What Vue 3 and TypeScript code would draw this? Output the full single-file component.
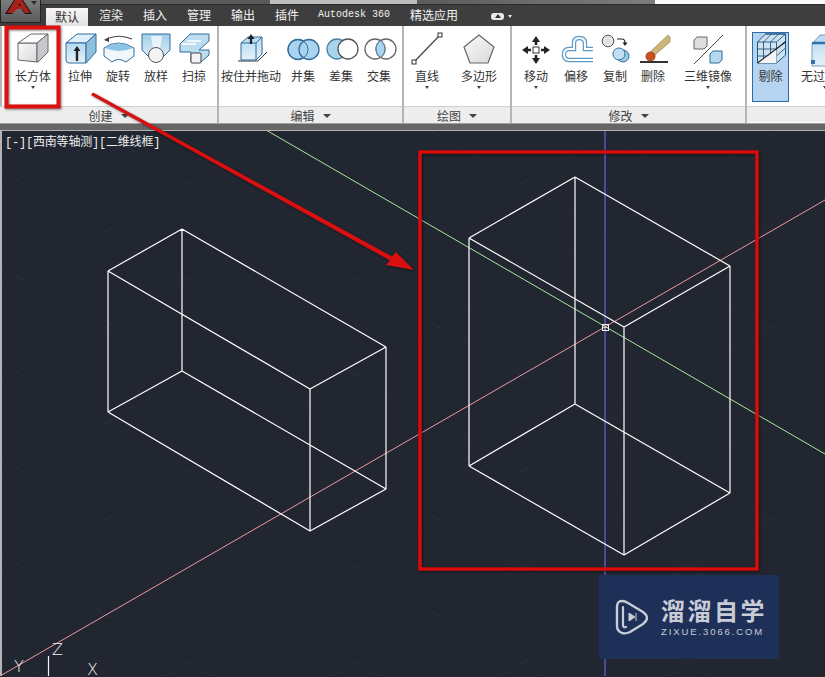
<script setup lang="ts">
interface Tool {
  label: string
  cx: number
  w: number
  ml?: number
  arrow?: boolean
  active?: boolean
  start?: boolean
  icon: string
}
interface Panel {
  width: number
  pad: number
  title: string
  tools: Tool[]
}

const BLUE = 'url(#gBlue)'
const GREY = 'url(#gGrey)'
const EDGE = '#2f6d9c'

const panels: Panel[] = [
  {
    width: 219, pad: 14, title: '创建',
    tools: [
      { label: '长方体', cx: 33, w: 38, arrow: true,
        icon: `<path d="M18 43 H37 V62 L18 60 Z" fill="url(#gGrey)" stroke="#666" stroke-linejoin="round"/><path d="M18 43 L31 34 H48 L37 43 Z" fill="#fcfcfc" stroke="#666" stroke-linejoin="round"/><path d="M37 43 L48 34 V52 L38 62 L37 62 Z" fill="#c6c8cb" stroke="#666" stroke-linejoin="round"/>` },
      { label: '拉伸', cx: 80, w: 38, ml: 9,
        icon: `<path d="M66 43 L77 34 H96 L86 43 Z" fill="#dff0fa" stroke="${EDGE}" stroke-linejoin="round"/><path d="M66 43 H86 V63 H69 Q66 63 66 60 Z" fill="${BLUE}" stroke="${EDGE}"/><path d="M86 43 L96 34 V52 L86 63 Z" fill="#8fc1df" stroke="${EDGE}" stroke-linejoin="round"/><path d="M77 61 V50" stroke="#222" stroke-width="2.4"/><path d="M73.5 51 L77 46 L80.5 51 Z" fill="#222"/>` },
      { label: '旋转', cx: 118, w: 38,
        icon: `<path d="M105 40 Q118 33 132 39" fill="none" stroke="#444" stroke-width="1.2"/><path d="M104 40 L109 37 V42 Z" fill="#444"/><path d="M104 48 Q118 38 134 48 V56 L126 62 Q118 57 112 62 L104 56 Z" fill="#f1f6f9" stroke="${EDGE}" stroke-linejoin="round"/><path d="M105 48 Q118 39 133 48 Q119 54 105 48 Z" fill="#8dc4e4"/>` },
      { label: '放样', cx: 156, w: 38,
        icon: `<path d="M142 34 H170 V50 L160 60 H152 L142 50 Z" fill="url(#gBlueV)" stroke="${EDGE}" stroke-linejoin="round"/><path d="M151 36 H162 L160 48 H153 Z" fill="#fff" opacity=".7"/><circle cx="156" cy="55" r="7.5" fill="#f4f4f4" stroke="#555"/>` },
      { label: '扫掠', cx: 194, w: 38,
        icon: `<path d="M180 44 L190 34 H209 V41 L199 50 H209 V55 L201 62 H191 V52 L180 52 Z" fill="#bcdcef" stroke="${EDGE}" stroke-linejoin="round"/><path d="M187 41 H201 M181 44 H196" stroke="#fff" stroke-width="1.4"/><rect x="191" y="53" width="10" height="10" rx="1" fill="#f3f3f3" stroke="#444"/>` },
    ],
  },
  {
    width: 185, pad: 1, title: '编辑',
    tools: [
      { label: '按住并拖动', cx: 251, w: 62,
        icon: `<path d="M238 61 H258 L267 52" fill="none" stroke="#333"/><path d="M241 43 L248 37 H262 V54 L256 60 H241 Z" fill="${BLUE}" stroke="${EDGE}" stroke-linejoin="round"/><path d="M241 43 H256 L262 37 M256 43 V60" fill="none" stroke="${EDGE}"/><path d="M251 44 V38" stroke="#222" stroke-width="2.2"/><path d="M247.5 39 L251 34 L254.5 39 Z" fill="#222"/>` },
      { label: '并集', cx: 303, w: 38, ml: 2,
        icon: `<circle cx="298" cy="49.5" r="10" fill="#a9d3ee" stroke="${EDGE}" stroke-width="1.3"/><circle cx="309" cy="49.5" r="10" fill="#a9d3ee" stroke="${EDGE}" stroke-width="1.3"/><circle cx="298" cy="49.5" r="10" fill="none" stroke="${EDGE}" stroke-width="1"/>` },
      { label: '差集', cx: 341, w: 38,
        icon: `<circle cx="337" cy="49" r="10" fill="#a9d3ee" stroke="#4f7f9f" stroke-width="1.3"/><circle cx="348" cy="49" r="10" fill="#fff" stroke="#555" stroke-width="1.3"/>` },
      { label: '交集', cx: 379, w: 38,
        icon: `<circle cx="375" cy="49" r="10" fill="#fff" stroke="#666" stroke-width="1.3"/><circle cx="386" cy="49" r="10" fill="none" stroke="#666" stroke-width="1.3"/><path d="M380.5 40.7 A10 10 0 0 1 380.5 57.3 A10 10 0 0 1 380.5 40.7 Z" fill="#a9d3ee" stroke="#4f7f9f"/>` },
    ],
  },
  {
    width: 108, pad: 0, title: '绘图',
    tools: [
      { label: '直线', cx: 427, w: 46, arrow: true,
        icon: `<path d="M414 62 L440 35" stroke="#444" stroke-width="1.2"/><rect x="412" y="60" width="4" height="4" fill="#fff" stroke="#333"/><rect x="438" y="33" width="4" height="4" fill="#fff" stroke="#333"/>` },
      { label: '多边形', cx: 479, w: 58, arrow: true,
        icon: `<path d="M479 35 L494 47 L488 63 H470 L464 47 Z" fill="${GREY}" stroke="#666" stroke-width="1.2" stroke-linejoin="round"/>` },
    ],
  },
  {
    width: 235, pad: 0, title: '修改',
    tools: [
      { label: '移动', cx: 536, w: 48, arrow: true,
        icon: `<rect x="533" y="47" width="6" height="6" fill="#fff" stroke="#333"/><path d="M536 36 L540 42 H537.3 V45 H534.7 V42 H532 Z M536 64 L540 58 H537.3 V55 H534.7 V58 H532 Z M522 50 L528 46 V48.7 H531 V51.3 H528 V54 Z M550 50 L544 46 V48.7 H541 V51.3 H544 V54 Z" fill="#222"/>` },
      { label: '偏移', cx: 576, w: 32,
        icon: `<path d="M593 49 H585 V43 Q585 38 579 38 Q574 38 574 43 V49 H569 Q564 49 564 54.5 Q564 60 569 60 H593" fill="none" stroke="#5d9cc7" stroke-width="4.4"/><path d="M593 49 H585 V43 Q585 38 579 38 Q574 38 574 43 V49 H569 Q564 49 564 54.5 Q564 60 569 60 H593" fill="none" stroke="#fff" stroke-width="2"/>` },
      { label: '复制', cx: 615, w: 46,
        icon: `<circle cx="608" cy="41" r="5.8" fill="#e5e5e5" stroke="#555"/><path d="M617 39 H622 Q625 39 625 43" fill="none" stroke="#222" stroke-width="1.2"/><path d="M622.5 42.5 H627.5 L625 46 Z" fill="#222"/><circle cx="623" cy="56" r="6" fill="#9ccbe8" stroke="${EDGE}"/><circle cx="619" cy="54" r="6" fill="#c3e0f2" stroke="${EDGE}"/>` },
      { label: '删除', cx: 653, w: 30,
        icon: `<path d="M640 62 H668" stroke="#333" stroke-width="2"/><path d="M668 35 L670 37 V42 L655 55 L651 51 Z" fill="#cdb67a" stroke="#8d7a45" stroke-width=".6"/><path d="M651 51 L655 55 L654 57 L649 52 Z" fill="#bbb"/><circle cx="650.5" cy="56.5" r="4.6" fill="#c9501c" stroke="#7a2e10" stroke-width=".6"/>` },
      { label: '三维镜像', cx: 708, w: 74, ml: 3, arrow: true,
        icon: `<path d="M694 64 L723 35" stroke="#444"/><path d="M694 40 L697 37 H707 V46 L704 49 H694 Z" fill="#dedede" stroke="#666" stroke-linejoin="round"/><path d="M710 54 L713 51 H722 V60 L719 63 H710 Z" fill="#b6d9ef" stroke="${EDGE}" stroke-linejoin="round"/>` },
    ],
  },
  {
    width: 80, pad: 5, title: '',
    tools: [
      { label: '剔除', cx: 770.5, w: 37, active: true,
        icon: `<path d="M757 42 L765 34 H785 V55 L776 63 H757 Z" fill="#cfe2f1" stroke="#22577f"/><path d="M757 42 H776 L785 34 M776 42 V63 M757 49 H776 L785 41 M757 56 H776 L785 48 M763 42 V63 M770 42 V63 M765 34 H785 M771 34 L763 42 M778 34 L770 42" fill="none" stroke="#22577f" stroke-width=".9"/><path d="M757 63 L776 50 V63 Z" fill="#f5f5f5"/><path d="M757 63 L785 42" stroke="#222" stroke-width="1.1"/>` },
      { label: '无过', cx: 825, w: 48, ml: 12, arrow: true, start: true,
        icon: `<path d="M812 44 L820 35 H845 V66 H812 Z" fill="${BLUE}" stroke="#7a9db5"/><path d="M812 43 H845" stroke="#2f73ad" stroke-width="2.4"/><rect x="811" y="60" width="4" height="4" fill="#2f73ad"/>` },
    ],
  },
]

const viewBoxOf = (t: Tool): string => `${t.cx - 20} 29 40 38`

const tabs: string[] = ['默认', '渲染', '插入', '管理', '输出', '插件']

// Faint construction grid: two isometric families through the origin of the drawing.
const OX = 605
const OY = 328
const SLOPE = 0.577
const gridLines: string[] = []
for (let k = -9; k <= 9; k++) {
  if (k === 0) continue
  const off = k * 96
  gridLines.push(`M0 ${OY + off + OX * SLOPE} L825 ${OY + off - (825 - OX) * SLOPE}`)
  gridLines.push(`M0 ${OY + off - OX * SLOPE} L825 ${OY + off + (825 - OX) * SLOPE}`)
}

const boxes: number[][][] = [
  [[182, 230], [108, 272], [310, 390], [386, 348], [182, 372], [108, 413], [310, 532], [386, 490]],
  [[575, 178], [469, 239], [624, 328], [730, 267], [575, 405], [469, 467], [624, 556], [730, 494]],
]
const wire: number[][] = [[0, 1], [1, 2], [2, 3], [3, 0], [4, 5], [5, 6], [6, 7], [7, 4], [0, 4], [1, 5], [2, 6], [3, 7]]
const wirePaths: string[] = boxes.map((b) =>
  wire.map(([a, c]) => `M${b[a][0]} ${b[a][1]} L${b[c][0]} ${b[c][1]}`).join(' '),
)
</script>

<template>
  <div class="app">
    <svg class="defs" width="0" height="0" aria-hidden="true">
      <defs>
        <linearGradient id="gBlue" x1="0" y1="0" x2="0" y2="1">
          <stop offset="0" stop-color="#b4d9f0" />
          <stop offset="1" stop-color="#e4f1f8" />
        </linearGradient>
        <linearGradient id="gBlueV" x1="0" y1="0" x2="0" y2="1">
          <stop offset="0" stop-color="#9fcde9" />
          <stop offset="1" stop-color="#e6f2f9" />
        </linearGradient>
        <linearGradient id="gGrey" x1="0" y1="0" x2="1" y2="1">
          <stop offset="0" stop-color="#fbfbfb" />
          <stop offset="1" stop-color="#d6d8db" />
        </linearGradient>
      </defs>
    </svg>

    <div class="titlebar">
      <span class="seg seg-dark"></span>
      <span class="seg seg-light"></span>
      <span class="seg seg-mid"></span>
      <span class="seg seg-white"></span>
    </div>

    <div class="tabs">
      <span v-for="(t, i) in tabs" :key="t" class="tab" :class="{ current: i === 0 }">{{ t }}</span>
      <span class="tab tab-mono">Autodesk 360</span>
      <span class="tab tab-wide">精选应用</span>
      <span class="tab-pill"><i class="pill-up"></i></span>
      <i class="pill-arrow"></i>
    </div>

    <div class="ribbon">
      <section
        v-for="p in panels"
        :key="p.title + p.width"
        class="panel"
        :style="{ width: p.width + 'px' }"
      >
        <div class="panel-body" :style="{ paddingLeft: p.pad + 'px' }">
          <div
            v-for="t in p.tools"
            :key="t.label"
            class="tool"
            :class="{ active: t.active }"
            :style="{ width: t.w + 'px', marginLeft: (t.ml || 0) + 'px' }"
          >
            <svg class="icon" width="40" height="38" :viewBox="viewBoxOf(t)" v-html="t.icon"></svg>
            <span class="label" :class="{ 'label-start': t.start }">{{ t.label }}</span>
            <i v-if="t.arrow" class="drop"></i>
          </div>
        </div>
        <div class="panel-foot">
          <template v-if="p.title">
            <span>{{ p.title }}</span><i class="foot-arrow"></i>
          </template>
        </div>
      </section>
    </div>

    <div class="divider"></div>

    <div class="viewport">
      <svg class="canvas" width="825" height="545" viewBox="0 132 825 545">
        <path v-for="(g, i) in gridLines" :key="i" :d="g" stroke="#282d37" fill="none" />
        <path d="M1 132 V677" stroke="#b4b4b4" stroke-width="2" />
        <path d="M605 132 V677" stroke="#6a6cf0" stroke-width="1.1" />
        <path d="M266 131 L825 455" stroke="#a6e6a0" />
        <path d="M0 677 L825 201" stroke="#ec9aa2" />
        <path v-for="(w, i) in wirePaths" :key="'w' + i" :d="w" stroke="#ffffff" stroke-width="1.2" fill="none" />
        <rect x="602.5" y="325.5" width="6" height="6" fill="none" stroke="#f2f2f2" />
        <path d="M605 326 V331 M603 328.5 H608" stroke="#f2f2f2" stroke-width=".6" />
        <path d="M48.5 657 V677" stroke="#f2f2f2" stroke-width="1.2" />
        <text x="52" y="656" class="ucs">Z</text>
        <text x="14" y="673" class="ucs">Y</text>
        <text x="87" y="676" class="ucs">X</text>
      </svg>
      <div class="view-label">[-][西南等轴测][二维线框]</div>
    </div>

    <svg class="marks" width="825" height="677" viewBox="0 0 825 677">
      <rect x="6.5" y="27.5" width="52" height="79" fill="none" stroke="#dd0f0f" stroke-width="4" />
      <rect x="420" y="152" width="337" height="417" fill="none" stroke="#dd0a0a" stroke-width="3.4" />
      <path d="M91 95 L93 92.5 L392 256.6 L396 252 L414 270 L386 265 L390 260.5 Z" fill="#d81010" />
    </svg>

    <div class="logo">
      <svg width="30" height="14" viewBox="0 0 30 14">
        <path d="M2 14 L11 0 H20 L29 14 H22 L15.5 5 L9 14 Z" fill="#191111" />
        <path d="M4 13 L12 0 H19 L27 13 H22 L19 9 H14 L10 13 Z M15 6 H18 L16.5 3.5 Z" fill="#a8211b" />
      </svg>
      <i class="logo-arrow"></i>
    </div>

    <div class="watermark">
      <svg class="wm-icon" width="34" height="36" viewBox="0 0 34 36">
        <path d="M3 8 Q3 2 8 2 Q11 2 14 4 L29 13 Q33 16 33 19 Q33 22 29 25 L16 33 Q12 35 8 34 Q3 32 3 27 Z" fill="none" stroke="#c8ccd6" stroke-width="2.4" stroke-linejoin="round" />
        <path d="M9 8 V26 Q9 29 12 28" fill="none" stroke="#c8ccd6" stroke-width="2.2" stroke-linecap="round" />
        <path d="M15 14 L21 18 L15 22 Z M22 14 V22" fill="#c8ccd6" stroke="#c8ccd6" />
      </svg>
      <div class="wm-text">
        <div class="wm-title">溜溜自学</div>
        <div class="wm-sub">ZIXUE.3066.COM</div>
      </div>
    </div>
  </div>
</template>

<style>
html,
body {
  margin: 0;
  padding: 0;
  background: #212630;
}
</style>

<style scoped>
.app {
  position: relative;
  width: 825px;
  height: 677px;
  overflow: hidden;
  display: flex;
  flex-direction: column;
  font-family: "Noto Sans CJK SC", "Liberation Sans", sans-serif;
  font-size: 12px;
  background: #212630;
}
.defs {
  position: absolute;
}
.titlebar {
  display: flex;
  height: 5px;
  flex: none;
  border-bottom: 1px solid #2a2a2a;
  box-sizing: border-box;
}
.seg-dark {
  width: 270px;
  background: #5a5a5a;
}
.seg-light {
  width: 147px;
  background: #bdbdbd;
}
.seg-mid {
  width: 238px;
  background: linear-gradient(90deg, #5b5b5b, #7d7d7d);
}
.seg-white {
  flex: 1;
  background: #fafafa;
}
.tabs {
  display: flex;
  align-items: stretch;
  height: 21px;
  flex: none;
  padding-left: 46px;
  background: #3e3e3e;
  color: #f2f2f2;
}
.tab {
  width: 44px;
  text-align: center;
  line-height: 20px;
  white-space: nowrap;
}
.tab.current {
  width: 42px;
  margin: 3px 1px 0 0;
  line-height: 17px;
  color: #333;
  background: linear-gradient(#f6f6f6, #e2e2e2);
}
.tab-mono {
  width: 90px;
  font-family: "Liberation Mono", monospace;
  font-size: 10px;
}
.tab-wide {
  width: 70px;
}
.tab-pill {
  position: relative;
  width: 13px;
  height: 7px;
  margin: 8px 0 0 22px;
  border-radius: 3px;
  background: #e8e8e8;
}
.pill-up {
  position: absolute;
  left: 3.5px;
  top: 1px;
  border: 3px solid transparent;
  border-top: 0;
  border-bottom: 4px solid #333;
}
.pill-arrow {
  width: 0;
  height: 0;
  margin: 10px 0 0 4px;
  border: 2.5px solid transparent;
  border-bottom: 0;
  border-top: 3px solid #e8e8e8;
}
.ribbon {
  display: flex;
  height: 97px;
  flex: none;
  background: #fff;
  box-shadow: inset 2px 0 0 #b5b5b5;
}
.panel {
  display: flex;
  flex: none;
  flex-direction: column;
  box-sizing: border-box;
  border-right: 2px solid #b4b4b4;
  padding-bottom: 1px;
}
.panel:last-child {
  border-right: 0;
}
.panel-body {
  display: flex;
  height: 80px;
  flex: none;
}
.tool {
  position: relative;
  display: flex;
  flex: none;
  flex-direction: column;
  align-items: center;
  padding-top: 3px;
  box-sizing: border-box;
  color: #333;
}
.tool.active {
  height: 70px;
  margin-top: 6px;
  padding-top: 0;
  border: 1px solid #2a6cae;
  background: #b6d3ef;
}
.icon {
  display: block;
  flex: none;
}
.tool.active .icon {
  margin-top: -4px;
}
.label {
  height: 18px;
  line-height: 18px;
  white-space: nowrap;
}
.label-start {
  align-self: flex-start;
}
.drop {
  width: 0;
  height: 0;
  margin-top: 1px;
  border: 2.5px solid transparent;
  border-bottom: 0;
  border-top: 3px solid #444;
}
.panel-foot {
  display: flex;
  align-items: center;
  justify-content: center;
  gap: 8px;
  flex: 1;
  border-top: 1px solid #cfcfcf;
  background: #ededed;
  color: #444;
}
.foot-arrow {
  width: 0;
  height: 0;
  border: 4px solid transparent;
  border-bottom: 0;
  border-top: 4px solid #444;
}
.divider {
  height: 8px;
  flex: none;
  box-sizing: border-box;
  border-top: 1px solid #a0a0a0;
  border-bottom: 1px solid #b0b0b0;
  background: #666;
}
.viewport {
  position: relative;
  flex: 1;
  min-height: 0;
  background: #212630;
}
.canvas {
  display: block;
}
.ucs {
  font-family: "DejaVu Sans", sans-serif;
  font-size: 16px;
  font-weight: 200;
  fill: #f2f2f2;
}
.view-label {
  position: absolute;
  left: 5px;
  top: 4px;
  color: #eee;
  line-height: 16px;
  letter-spacing: -0.2px;
  white-space: nowrap;
  font-family: "Liberation Mono", "Noto Sans CJK SC", monospace;
}
.marks {
  position: absolute;
  left: 0;
  top: 0;
  pointer-events: none;
  filter: drop-shadow(1px 1px 1px rgba(0, 0, 0, 0.5));
}
.logo {
  position: absolute;
  left: 0;
  top: 0;
  display: flex;
  justify-content: center;
  box-sizing: border-box;
  width: 41px;
  height: 23px;
  padding-right: 5px;
  border: 1px solid #222;
  border-top: 0;
  border-radius: 0 0 2px 2px;
  background: linear-gradient(#7d7d7d, #5b5b5b);
}
.logo-arrow {
  position: absolute;
  right: 3px;
  top: 1px;
  border: 3px solid transparent;
  border-bottom: 0;
  border-top: 4px solid #2e2e2e;
}
.watermark {
  position: absolute;
  left: 599px;
  top: 575px;
  display: flex;
  align-items: center;
  gap: 13px;
  box-sizing: border-box;
  width: 180px;
  height: 84px;
  padding: 0 0 0 15px;
  background: #1f3058;
  color: #c8ccd6;
}
.wm-icon {
  flex: none;
}
.wm-title {
  font-size: 24px;
  line-height: 26px;
  font-weight: 700;
  letter-spacing: 2.5px;
  white-space: nowrap;
}
.wm-sub {
  margin-top: 3px;
  font-family: "Liberation Sans", sans-serif;
  font-size: 9.5px;
  line-height: 11px;
  letter-spacing: 1.9px;
  white-space: nowrap;
}
</style>
